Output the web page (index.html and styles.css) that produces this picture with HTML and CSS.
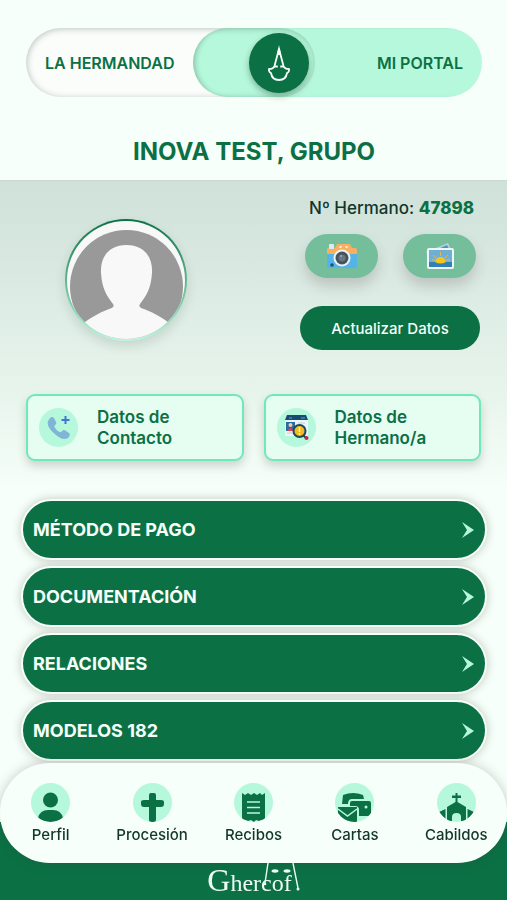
FILE: index.html
```html
<!DOCTYPE html>
<html lang="es">
<head>
  <meta charset="UTF-8">
  <meta name="viewport" content="width=device-width, initial-scale=1">
  <title>Mi portal</title>
  <link rel="stylesheet" href="styles.css">
</head>
<body>

<header class="top">
  <nav class="switch">
    <a class="side portal" href="#portal">MI PORTAL</a>
    <a class="side hermandad" href="#hermandad">LA HERMANDAD</a>
    <button class="knob" type="button" aria-label="Cambiar">
      <svg width="24" height="38" viewBox="0 0 24 38" fill="none" stroke="#f6fff9" stroke-width="1.8" stroke-linejoin="round">
        <path d="M12 5 L7.500 22 Q6.500 25 2 25 Q1.500 28 4 29 Q5 36 12 36 Q19 36 20 29 Q22.500 28 22 25 Q17.500 25 16.500 22 Z"/>
        <path d="M12 1 L9.800 11 H14.200 Z" fill="#f6fff9" stroke="none"/>
        <path d="M7 22.500 H10.800 M13.200 22.500 H17"/>
      </svg>
    </button>
  </nav>
  <h1>INOVA TEST, GRUPO</h1>
</header>

<main>
  <section class="profile">
    <div class="summary">
      <div class="avatar">
        <svg width="113" height="113" viewBox="0 0 113 113">
          <defs><clipPath id="disc"><circle cx="56.500" cy="56.500" r="56.500"/></clipPath></defs>
          <g clip-path="url(#disc)">
            <rect width="113" height="113" fill="#999"/>
            <path fill="#f8f8f8" d="M56.500 15 C39 15 30 27 31 43 C32 59 37 66 43 74 C45 77 42 78 39 79 C28 83 17 90 7 98 V113 H106 V98 C96 90 85 83 74 79 C71 78 68 77 70 74 C76 66 81 59 82 43 C83 27 74 15 56.500 15 Z"/>
          </g>
        </svg>
      </div>
      <div class="actions">
        <p class="number">Nº Hermano: <strong>47898</strong></p>
        <div class="photo-buttons">
          <button class="photo" type="button" aria-label="Cámara">
            <svg width="30" height="26" viewBox="0 0 30 26">
              <rect x="0" y="8" width="30" height="17" rx="1" fill="#54b4ea"/>
              <path d="M0 6 Q0 5 2 5 H8 L10 1 H23 L25 5 H28 Q30 5 30 7 V11 H0 Z" fill="#f9af62"/>
              <rect x="2" y="1" width="5" height="5" rx="1" fill="#dcebed"/>
              <path d="M13 3 H15 L14 5 H12 Z M18 3 H20 L21 5 H19 Z" fill="#fff0d2"/>
              <circle cx="15" cy="15" r="8.500" fill="#eef3f5"/>
              <circle cx="15" cy="15" r="6.500" fill="#46535f"/>
              <circle cx="15" cy="15" r="3.500" fill="#697580"/>
              <circle cx="14" cy="13" r="1" fill="#a5aeb5"/>
              <circle cx="5" cy="22" r="1.800" fill="#28516e"/>
            </svg>
          </button>
          <button class="photo" type="button" aria-label="Galería">
            <svg width="30" height="28" viewBox="0 0 30 28">
              <path d="M1 10 L23 1 L26 8 L5 16 Z" fill="#b9d3d6"/>
              <path d="M13 7 L22 3 L24 7 Z" fill="#4799c0"/>
              <rect x="2" y="6" width="27" height="21" rx="2" fill="#f0f6f7"/>
              <rect x="4" y="8" width="23" height="17" fill="#70afd4"/>
              <path d="M15.500 10 V14 M8 13 L11 16 M23 13 L20 16 M7 18 H10 M21 18 H25" stroke="#d9bb62"/>
              <rect x="4" y="20" width="23" height="5" fill="#2e80b5"/>
              <path d="M10 20 Q11 15 15.500 15 Q20 15 21 20 Q15.500 23 10 20 Z" fill="#f5c51d"/>
            </svg>
          </button>
        </div>
        <button class="update" type="button">Actualizar Datos</button>
      </div>
    </div>

    <div class="cards">
      <a class="card" href="#contacto">
        <span class="badge">
          <svg width="25" height="25" viewBox="0 0 25 25">
            <path d="M4 3 Q6 1 8 3 L10 7 Q11 9 9 10 Q8 11 9 13 Q11 16 14 17 Q15 18 16 16 Q18 14 20 16 L23 18 Q25 20 22 23 Q17 26 10 20 Q0 12 2 6 Z" fill="#81b5d5"/>
            <path d="M19.500 1 V9 M15.500 5 H23.500" stroke="#3f74cf" stroke-width="2"/>
          </svg>
        </span>
        <span>Datos de Contacto</span>
      </a>
      <a class="card" href="#hermano">
        <span class="badge">
          <svg width="25" height="26" viewBox="0 0 25 26">
            <rect x="1" y="3" width="23" height="18" rx="1" fill="#edf4fa"/>
            <path d="M3 0 H22 L24 5 H1 Z" fill="#174b70"/>
            <path d="M5 3 H8 M17 3 H21" stroke="#46b3cb"/>
            <rect x="2" y="7" width="9" height="9" fill="#286b9f"/>
            <circle cx="6.500" cy="10" r="2" fill="#f8c6ae"/>
            <path d="M3 16 Q6.500 10 10 16 Z" fill="#dd3e5c"/>
            <path d="M14 8 H21 M3 18 H9" stroke="#c4ccd6"/>
            <path d="M19 20 L22 23" stroke="#174b60" stroke-width="2"/>
            <circle cx="15.500" cy="16" r="6" fill="#f6b91c" stroke="#174b60" stroke-width="2"/>
            <path d="M15.500 12 V17 M15.500 18 V20" stroke="#fff1a8" stroke-width="1.500"/>
            <circle cx="22.500" cy="23" r="2" fill="#ce2346"/>
          </svg>
        </span>
        <span>Datos de Hermano/a</span>
      </a>
    </div>
  </section>

  <section class="menu">
    <button class="item" type="button">MÉTODO DE PAGO
      <svg class="arrow" viewBox="0 0 12 16"><path d="M0 0 L12 8 L0 16 L5 8 Z"/></svg>
    </button>
    <button class="item" type="button">DOCUMENTACIÓN
      <svg class="arrow" viewBox="0 0 12 16"><path d="M0 0 L12 8 L0 16 L5 8 Z"/></svg>
    </button>
    <button class="item" type="button">RELACIONES
      <svg class="arrow" viewBox="0 0 12 16"><path d="M0 0 L12 8 L0 16 L5 8 Z"/></svg>
    </button>
    <button class="item" type="button">MODELOS 182
      <svg class="arrow" viewBox="0 0 12 16"><path d="M0 0 L12 8 L0 16 L5 8 Z"/></svg>
    </button>
  </section>
</main>

<footer class="bottom">
  <nav class="tabs">
    <a class="tab" href="#perfil">
      <svg class="tab-icon" viewBox="0 0 39 39">
        <circle cx="19.500" cy="17" r="7.500"/>
        <path d="M7 35 Q9 27 17 27 H22 Q30 27 32 35 Q27 39 19.500 39 Q12 39 7 35 Z"/>
      </svg>
      Perfil
    </a>
    <a class="tab" href="#procesion">
      <svg class="tab-icon" viewBox="0 0 39 39">
        <path d="M18 10 H21 Q23 10 23 12 V17 H28 Q31 17 31 19 V21 Q31 24 28 24 H23 V37 Q23 39 21 39 H18 Q16 39 16 37 V24 H11 Q8 24 8 21 V19 Q8 17 11 17 H16 V12 Q16 10 18 10 Z"/>
      </svg>
      Procesión
    </a>
    <a class="tab" href="#recibos">
      <svg class="tab-icon" viewBox="0 0 39 39">
        <path d="M8 10 L11 12 L14 10 L17 12 L20 10 L23 12 L26 10 L28 12 L31 10 V38 L28 37 L25 38 L22 37 L20 39 L17 37 L14 38 L11 37 L8 38 Z"/>
        <path d="M13 19 H26 M13 24.500 H26 M13 30 H26" stroke="#b6f8dc" stroke-width="1.600"/>
      </svg>
      Recibos
    </a>
    <a class="tab" href="#cartas">
      <svg class="tab-icon" viewBox="0 0 39 39">
        <path d="M8 12 Q18 8 28 12 L29 16 H17 Q13 16 13 21 H7 Z"/>
        <path d="M17 18 H34 Q36 18 36 20 V30 Q36 33 33 33 H24 V27 Q24 23 20 23 H15 V20 Q15 18 17 18 Z"/>
        <circle cx="31" cy="24" r="1.500" fill="#b6f8dc"/>
        <path d="M3 24 H22 V39 H12 Q5 36 3 31 Z"/>
        <path d="M3 26 L12.500 33 L22 26" fill="none" stroke="#b6f8dc" stroke-width="1.500"/>
      </svg>
      Cartas
    </a>
    <a class="tab" href="#cabildos">
      <svg class="tab-icon" viewBox="0 0 39 39">
        <path d="M18.500 10 H20.500 V12.500 H24 V15 H20.500 V19 L29 24 V38 H24 V34 Q24 30 19.500 30 Q15 30 15 34 V38 H10 V24 L18.500 19 V15 H15 V12.500 H18.500 Z"/>
        <path d="M8.500 26 V36 Q4 32 2 29 Z M30.500 26 L37 29 Q35 32 30.500 36 Z"/>
      </svg>
      Cabildos
    </a>
  </nav>
  <div class="brand">
    <span class="brand-name">Ghercof</span>
    <svg class="hood" width="38" height="30" viewBox="0 0 38 30">
      <path d="M6 0 L3 20 M31 0 L36 25" fill="none" stroke="#eefcf3" stroke-width="1.400"/>
      <circle cx="3" cy="21" r="1.300"/><circle cx="36" cy="26" r="1.500"/>
      <ellipse cx="13" cy="8" rx="3.500" ry="1.700"/><ellipse cx="25" cy="8" rx="3.500" ry="1.700"/>
    </svg>
  </div>
</footer>

</body>
</html>
```

FILE: styles.css
```css
* {
  box-sizing: border-box;
}
body {
  margin: 0;
  padding-bottom: 137px;
  background: #f6fff9;
  color: #12362a;
  font-family: Inter, 'Liberation Sans', sans-serif;
}
button {
  border: none;
  padding: 0;
  font-family: inherit;
  cursor: pointer;
}
a {
  color: inherit;
  text-decoration: none;
}
svg {
  display: block;
}

/* header */
.top {
  padding: 28px 25px 0 26px;
  height: 180px;
}
.switch {
  display: grid;
  grid-template-columns: 11fr 8fr 11fr;
  height: 69px;
  border-radius: 35px;
  background: #fbfdfb;
}
.side {
  display: flex;
  align-items: center;
  grid-row: 1;
  border-radius: 35px;
  padding: 0 19px;
  color: #0b7145;
  font-size: 16px;
  font-weight: 600;
}
.portal {
  grid-column: 2 / 4;
  justify-content: flex-end;
  background: #b6f8dc;
  box-shadow: inset 5px 0 5px -3px rgba(0, 40, 20, 0.25);
}
.hermandad {
  grid-column: 1 / 3;
  box-shadow: inset 1px 1px 6px rgba(0, 40, 20, 0.25);
}
.knob {
  display: flex;
  grid-area: 1 / 2;
  align-items: center;
  align-self: center;
  justify-content: center;
  justify-self: end;
  width: 60px;
  height: 60px;
  margin-right: 6px;
  border-radius: 50%;
  background: #0b7145;
  box-shadow: 0 3px 6px rgba(0, 40, 20, 0.35);
}
h1 {
  margin: 41px 0 0;
  color: #0b7145;
  font-size: 24px;
  line-height: 28px;
  text-align: center;
}

/* profile */
.profile {
  padding: 17px 26px 30px;
  border-top: 1px solid #cad8d1;
  background: linear-gradient(#cfe1d9, #e8f5ed 70%, #f6fff9);
}
.summary {
  display: flex;
  justify-content: space-between;
  padding-right: 1px;
}
.avatar {
  display: flex;
  justify-content: center;
  width: 122px;
  height: 122px;
  margin: 21px 0 0 39px;
  border: 2px solid transparent;
  border-radius: 50%;
  padding-top: 9px;
  background: linear-gradient(#f8f8f8, #f8f8f8) padding-box, linear-gradient(#0b7145, #b6f8dc) border-box;
  box-shadow: 0 5px 12px rgba(0, 40, 20, 0.13);
  overflow: hidden;
}
.actions {
  width: 180px;
}
.number {
  margin: 0 6px 15px;
  font-size: 17px;
  font-weight: 500;
  line-height: 21px;
  text-align: right;
  white-space: nowrap;
}
.number strong {
  color: #0b7145;
  font-weight: 800;
}
.photo-buttons {
  display: flex;
  justify-content: space-between;
  padding: 0 4px 0 5px;
}
.photo {
  display: flex;
  align-items: center;
  justify-content: center;
  width: 73px;
  height: 44px;
  border-radius: 22px;
  background: #75be9c;
  box-shadow: 0 8px 14px rgba(60, 50, 50, 0.2);
}
.update {
  width: 100%;
  height: 44px;
  margin-top: 28px;
  border-radius: 22px;
  background: #0b7145;
  color: #f6fff9;
  font-size: 15px;
  font-weight: 500;
}
.cards {
  display: grid;
  grid-template-columns: 1fr 1fr;
  gap: 20px;
  margin-top: 44px;
}
.card {
  display: flex;
  align-items: center;
  gap: 19px;
  height: 67px;
  border: 2px solid #6fe9b7;
  border-radius: 9px;
  padding: 0 40px 0 11px;
  background: #e6fdf2;
  box-shadow: 0 5px 10px rgba(60, 50, 50, 0.2);
  color: #0b7145;
  font-size: 17px;
  font-weight: 600;
  line-height: 21px;
}
.badge {
  display: flex;
  flex: none;
  align-items: center;
  justify-content: center;
  width: 39px;
  height: 39px;
  border-radius: 50%;
  background: #b6f8dc;
}

/* menu */
.menu {
  display: flex;
  flex-direction: column;
  gap: 6px;
  padding: 8px 20px 20px 21px;
}
.item {
  display: flex;
  align-items: center;
  justify-content: space-between;
  height: 61px;
  border: 2px solid #f6fff9;
  border-radius: 31px;
  padding: 0 11px 0 10px;
  background: #0b7145;
  box-shadow: 0 0 10px rgba(60, 50, 50, 0.28);
  color: #f6fff9;
  font-size: 18px;
  font-weight: 700;
}
.arrow {
  width: 12px;
  height: 16px;
  fill: #b6f8dc;
}

/* bottom bar */
.bottom {
  position: fixed;
  right: 0;
  bottom: 0;
  left: 0;
  background: linear-gradient(transparent 59px, #0b7145 59px);
}
.tabs {
  display: grid;
  grid-template-columns: repeat(5, 1fr);
  height: 100px;
  border-radius: 50px;
  padding-top: 20px;
  background: #f6fff9;
  box-shadow: 0 0 12px rgba(60, 50, 50, 0.25);
}
.tab {
  display: flex;
  flex-direction: column;
  align-items: center;
  gap: 3px;
  font-size: 15px;
  font-weight: 500;
  line-height: 20px;
}
.tab-icon {
  width: 39px;
  height: 39px;
  border-radius: 50%;
  background: #b6f8dc;
  fill: #0b7145;
}
.brand {
  display: flex;
  justify-content: center;
  height: 37px;
  color: #eefcf3;
}
.brand-name {
  display: inline-block;
  font-family: 'Liberation Serif', serif;
  font-size: 24px;
  line-height: 34px;
}
.brand-name::first-letter {
  font-size: 32px;
}
.hood {
  margin-left: -30px;
  fill: #eefcf3;
}
```
